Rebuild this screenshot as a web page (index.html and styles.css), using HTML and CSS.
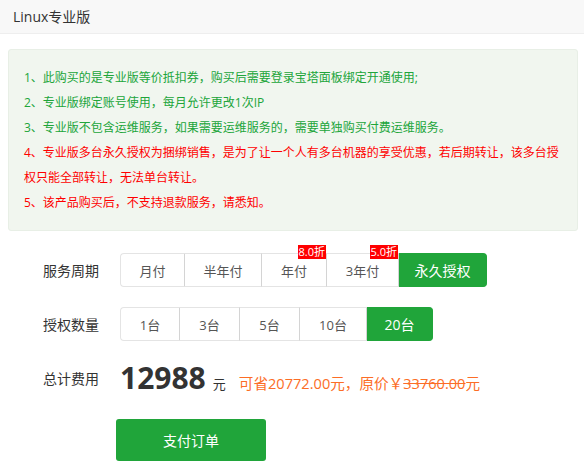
FILE: index.html
```html
<!DOCTYPE html>
<html lang="zh-CN">
<head>
<meta charset="utf-8">
<title>Linux专业版</title>
<link rel="stylesheet" href="styles.css">
</head>
<body>
<div class="dialog">
  <div class="header">Linux专业版</div>
  <div class="content">
    <div class="notice">
      <p class="ok">1、此购买的是专业版等价抵扣券，购买后需要登录宝塔面板绑定开通使用;</p>
      <p class="ok">2、专业版绑定账号使用，每月允许更改1次IP</p>
      <p class="ok">3、专业版不包含运维服务，如果需要运维服务的，需要单独购买付费运维服务。</p>
      <p class="warn">4、专业版多台永久授权为捆绑销售，是为了让一个人有多台机器的享受优惠，若后期转让，该多台授权只能全部转让，无法单台转让。</p>
      <p class="warn">5、该产品购买后，不支持退款服务，请悉知。</p>
    </div>

    <div class="row row-period">
      <div class="label">服务周期</div>
      <div class="group period">
        <div class="opt">月付</div>
        <div class="opt">半年付</div>
        <div class="opt">年付<span class="badge">8.0折</span></div>
        <div class="opt">3年付<span class="badge">5.0折</span></div>
        <div class="opt active">永久授权</div>
      </div>
    </div>

    <div class="row row-count">
      <div class="label">授权数量</div>
      <div class="group count">
        <div class="opt">1台</div>
        <div class="opt">3台</div>
        <div class="opt">5台</div>
        <div class="opt">10台</div>
        <div class="opt active">20台</div>
      </div>
    </div>

    <div class="row row-price">
      <div class="label">总计费用</div>
      <div class="price">
        <span class="amount">12988</span>
        <span class="unit">元</span>
        <span class="save">可省20772.00元，原价￥<del>33760.00</del>元</span>
      </div>
    </div>

    <div class="pay-row">
      <button class="pay">支付订单</button>
    </div>
  </div>
</div>
</body>
</html>
```

FILE: styles.css
```css
* { box-sizing: border-box; }
html, body {
  margin: 0;
  padding: 0;
  background: #fff;
}
body {
  font-family: "Open Sans", "Noto Sans CJK SC", sans-serif;
  color: #333;
  width: 584px;
  height: 472px;
  overflow: hidden;
}
.header {
  height: 34px;
  line-height: 33px;
  padding-left: 13px;
  font-size: 14px;
  color: #333;
  background: #f8f8f8;
  border-bottom: 1px solid #eee;
}
.content {
  padding: 15px 6px 0 8px;
}
.notice {
  background: #f1f6ef;
  border: 1px solid #e8efe6;
  border-radius: 3px;
  padding: 15px;
}
.notice p {
  margin: 0;
  font-size: 12px;
  line-height: 25px;
}
.notice .ok { color: #20a53a; }
.notice .warn { color: #ff0000; }

.row {
  display: flex;
  align-items: center;
  padding-left: 35px;
}
.label {
  width: 77px;
  font-size: 14px;
  color: #333;
}
.row-period {
  margin-top: 22px;
  height: 34px;
}
.row-count {
  margin-top: 20px;
  height: 34px;
}
.group {
  display: flex;
  height: 34px;
}
.opt {
  position: relative;
  display: flex;
  align-items: center;
  justify-content: center;
  flex: none;
  font-size: 13px;
  color: #555;
  background: #fff;
  border-top: 1px solid #e4e4e4;
  border-bottom: 1px solid #e4e4e4;
  border-right: 1px solid #d4d4d4;
}
.opt:first-child {
  border-left: 1px solid #e4e4e4;
  border-radius: 4px 0 0 4px;
}
.opt:last-child {
  border-right-color: #e4e4e4;
  border-radius: 0 4px 4px 0;
}
.period .opt:nth-child(1) { width: 65px; }
.period .opt:nth-child(2) { width: 77px; }
.period .opt:nth-child(3) { width: 65px; }
.period .opt:nth-child(4) { width: 72px; }
.period .opt:nth-child(5) { width: 88px; }
.count .opt:nth-child(1) { width: 60px; }
.count .opt:nth-child(2) { width: 60px; }
.count .opt:nth-child(3) { width: 60px; }
.count .opt:nth-child(4) { width: 67px; }
.count .opt:nth-child(5) { width: 66px; }
.opt.active {
  background: #20a53a;
  border-color: #20a53a;
  color: #fff;
  font-size: 14px;
}
.badge {
  position: absolute;
  top: -9px;
  right: 0;
  height: 14px;
  line-height: 14px;
  padding: 0 1px;
  background: #ff0000;
  color: #fff;
  font-size: 11px;
}

.row-price {
  margin-top: 17px;
  height: 40px;
}
.price {
  display: flex;
  align-items: baseline;
  white-space: nowrap;
}
.amount {
  font-size: 30px;
  font-weight: 700;
  color: #333;
  line-height: 40px;
}
.unit {
  font-size: 13px;
  color: #333;
  margin-left: 7px;
}
.save {
  font-size: 14.6px;
  color: #fc6d26;
  margin-left: 13px;
}
.save del {
  text-decoration: line-through;
}
.pay-row {
  margin-top: 21px;
  padding-left: 108px;
}
.pay {
  width: 150px;
  height: 42px;
  border: 0;
  border-radius: 3px;
  background: #20a53a;
  color: #fff;
  font-family: inherit;
  font-size: 14px;
  cursor: pointer;
}
```
